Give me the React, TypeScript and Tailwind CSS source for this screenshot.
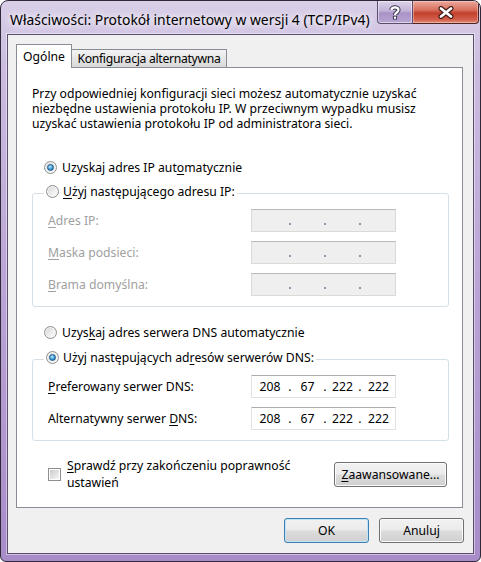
import React from "react";

type Kids = { children?: React.ReactNode };

function U({ children }: Kids) {
  return <span className="underline underline-offset-[2px]">{children}</span>;
}

function Radio({ checked }: { checked?: boolean }) {
  return (
    <span className="flex h-[13px] w-[13px] shrink-0 items-center justify-center rounded-full border border-[#8e8f8f] bg-[linear-gradient(135deg,#d2d2d2,#f0f0f0_60%,#ffffff)] shadow-[inset_0_0_0_1px_#f4f4f4]">
      {checked && (
        <span className="h-[7px] w-[7px] rounded-full border border-[#1d5a8a] bg-[radial-gradient(circle_at_40%_35%,#b8ecff,#3d9ad8_55%,#14507e)]" />
      )}
    </span>
  );
}

function Checkbox() {
  return (
    <span className="flex h-[13px] w-[13px] shrink-0 items-center justify-center border border-[#8e8f8f] bg-white">
      <span className="h-[9px] w-[9px] bg-[linear-gradient(135deg,#cbcbcb,#f6f6f6)]" />
    </span>
  );
}

function Seg({ w, children }: { w: string; children?: React.ReactNode }) {
  return <span className={`${w} text-center`}>{children}</span>;
}

function Dot({ disabled }: { disabled?: boolean }) {
  return (
    <span className="flex w-[4px] justify-center">
      {disabled ? (
        <span className="mt-[7px] h-[2px] w-[2px] bg-[#8a98ad]" />
      ) : (
        <span>.</span>
      )}
    </span>
  );
}

function IpField({ parts, disabled }: { parts?: string[]; disabled?: boolean }) {
  const p = parts ?? ["", "", "", ""];
  return (
    <div
      className={`flex h-[23px] w-[145px] shrink-0 items-center border ${
        disabled
          ? "border-[#dadada] border-t-[#b9b9b9] bg-[#efefef]"
          : "border-[#dfe3e8] border-t-[#abadb3] bg-white"
      }`}
    >
      <Seg w="w-[36px]">{p[0]}</Seg>
      <Dot disabled={disabled} />
      <Seg w="w-[31px]">{p[1]}</Seg>
      <Dot disabled={disabled} />
      <Seg w="w-[31px]">{p[2]}</Seg>
      <Dot disabled={disabled} />
      <Seg w="w-[33px]">{p[3]}</Seg>
    </div>
  );
}

function Btn({ children, def, w }: { children: React.ReactNode; def?: boolean; w: string }) {
  return (
    <div
      className={`flex h-[25px] ${w} items-center justify-center rounded-[3px] border ${
        def
          ? "border-[#3c7fb1] shadow-[inset_0_0_0_1px_#bfe4f7]"
          : "border-[#707070] shadow-[inset_0_0_0_1px_#fbfbfb]"
      } bg-[linear-gradient(#f2f2f2,#ebebeb_48%,#dddddd_52%,#cfcfcf)]`}
    >
      {children}
    </div>
  );
}

function FieldRow({ label, disabled, parts }: { label: React.ReactNode; disabled?: boolean; parts?: string[] }) {
  return (
    <div className="flex h-[23px] items-center">
      <div className={`w-[203px] ${disabled ? "text-[#a0a0a0]" : ""}`}>{label}</div>
      <IpField disabled={disabled} parts={parts} />
    </div>
  );
}

function GroupBox({ header, children }: { header: React.ReactNode; children: React.ReactNode }) {
  return (
    <div className="w-[417px] rounded-[3px] border border-[#d5dfe5] pb-[10px] pl-[15px]">
      <div className="-mt-[11px] ml-[-4px] flex h-[17px] w-fit items-center gap-[4px] bg-white px-[2px]">
        {header}
      </div>
      <div className="mt-[9px] flex flex-col gap-[9px]">{children}</div>
    </div>
  );
}

const dns = ["208", "67", "222", "222"];

export default function App() {
  return (
    <div className="relative h-[562px] w-[481px] overflow-hidden rounded-t-[8px] rounded-b-[6px] border border-[#2e2838] bg-[linear-gradient(180deg,#d9cfe8_0%,#cbbcdf_12%,#b9a2d5_55%,#a78cc8_100%)] font-['Segoe_UI','Noto_Sans',sans-serif] text-[12.2px] leading-[15px] text-black">
      {/* title bar */}
      <div className="flex h-[33px] items-start justify-between">
        <div className="whitespace-nowrap pl-[9px] pt-[10px] text-[13.9px] leading-[18px] [text-shadow:0_0_6px_#ffffff,0_0_10px_#ffffff]">
          Właściwości: Protokół internetowy w wersji 4 (TCP/IPv4)
        </div>
        <div className="mr-[1px] flex shrink-0">
          <div className="flex h-[23px] w-[36px] items-center justify-center rounded-bl-[4px] border border-t-0 border-[#5a4d6e] bg-[linear-gradient(#ddd3ea,#c1b1d6_45%,#a993c6_55%,#b9a6d3)] shadow-[inset_0_0_0_1px_rgba(255,255,255,0.5)]">
            <svg width="12" height="15" viewBox="0 0 12 15">
              <path d="M2.5 5 C2.5 1.5 9.5 1.5 9.5 5 C9.5 7.5 6 7.5 6 10" fill="none" stroke="#3a3450" strokeWidth="4.2" />
              <rect x="3.9" y="10.9" width="4.2" height="3.6" fill="#3a3450" />
              <path d="M2.5 5 C2.5 1.5 9.5 1.5 9.5 5 C9.5 7.5 6 7.5 6 10" fill="none" stroke="#ffffff" strokeWidth="2.2" />
              <rect x="4.9" y="11.6" width="2.2" height="2.2" fill="#ffffff" />
            </svg>
          </div>
          <div className="flex h-[23px] w-[66px] items-center justify-center rounded-br-[4px] border border-l-0 border-t-0 border-[#4a2420] bg-[linear-gradient(#eaa99d,#d8715f_40%,#c2402d_55%,#d3604c_85%,#e3907e)] shadow-[inset_0_0_0_1px_rgba(255,220,210,0.45)]">
            <svg width="16" height="13" viewBox="0 0 16 13">
              <path d="M3 2.5 L13 10.5 M13 2.5 L3 10.5" stroke="#3d1a16" strokeWidth="5" strokeLinecap="round" />
              <path d="M3 2.5 L13 10.5 M13 2.5 L3 10.5" stroke="#ffffff" strokeWidth="2.8" strokeLinecap="round" />
            </svg>
          </div>
        </div>
      </div>

      {/* client area */}
      <div className="mx-[6px] h-[520px] border border-[#5a4d6e] bg-[#f0f0f0] pl-[8px] pt-[9px] shadow-[0_0_0_1px_rgba(255,255,255,0.45)]">
        {/* tabs */}
        <div className="relative z-10 -mb-[1px] flex items-end">
          <div className="flex h-[24px] w-[56px] items-start justify-center border border-b-0 border-[#898c95] bg-white pt-[4px]">
            Ogólne
          </div>
          <div className="mb-[1px] flex h-[18px] w-[155px] items-center justify-center whitespace-nowrap border border-b-0 border-l-0 border-[#898c95] bg-[linear-gradient(#f3f3f3,#e6e6e6_50%,#d9d9d9)] tracking-[-0.3px]">
            Konfiguracja alternatywna
          </div>
        </div>

        {/* panel */}
        <div className="h-[441px] w-[447px] border border-[#898c95] bg-white pl-[15px] pt-[18px]">
          <p>
            Przy odpowiedniej konfiguracji sieci możesz automatycznie uzyskać
            <br />
            niezbędne ustawienia protokołu IP. W przeciwnym wypadku musisz
            <br />
            uzyskać ustawienia protokołu IP od administratora sieci.
          </p>

          <div className="ml-[12px] mt-[28px] flex h-[17px] items-center gap-[5px]">
            <Radio checked />
            <span>
              Uzyskaj adres IP aut<U>o</U>matycznie
            </span>
          </div>

          <div className="mt-[17px]">
            <GroupBox
              header={
                <>
                  <Radio />
                  <span>
                    <U>U</U>żyj następującego adresu IP:
                  </span>
                </>
              }
            >
              <FieldRow disabled label={<><U>A</U>dres IP:</>} />
              <FieldRow disabled label={<><U>M</U>aska podsieci:</>} />
              <FieldRow disabled label={<><U>B</U>rama domyślna:</>} />
            </GroupBox>
          </div>

          <div className="ml-[12px] mt-[17px] flex h-[17px] items-center gap-[5px]">
            <Radio />
            <span>
              Uzys<U>k</U>aj adres serwera DNS automatycznie
            </span>
          </div>

          <div className="mt-[18px]">
            <GroupBox
              header={
                <>
                  <Radio checked />
                  <span>
                    Użyj następujących ad<U>r</U>esów serwerów DNS:
                  </span>
                </>
              }
            >
              <FieldRow parts={dns} label={<><U>P</U>referowany serwer DNS:</>} />
              <FieldRow parts={dns} label={<>Alternatywny serwer <U>D</U>NS:</>} />
            </GroupBox>
          </div>

          <div className="mt-[16px] flex w-[415px] items-center justify-between pl-[16px]">
            <div className="flex items-center gap-[6px]">
              <Checkbox />
              <div className="leading-[17px]">
                <U>S</U>prawdź przy zakończeniu poprawność
                <br />
                ustawień
              </div>
            </div>
            <Btn w="w-[113px]">
              <span>
                <U>Z</U>aawansowane...
              </span>
            </Btn>
          </div>
        </div>

        {/* dialog buttons */}
        <div className="mt-[10px] flex w-[448px] justify-end gap-[10px]">
          <Btn def w="w-[85px]">
            OK
          </Btn>
          <Btn w="w-[85px]">Anuluj</Btn>
        </div>
      </div>
    </div>
  );
}
